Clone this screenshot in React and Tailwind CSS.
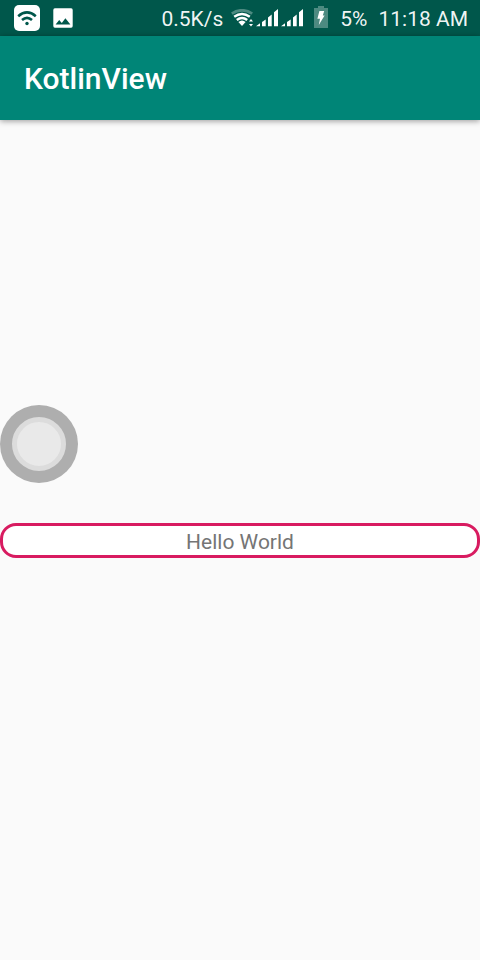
function HotspotIcon() {
  return (
    <svg width="26" height="26" viewBox="0 0 26 26" aria-hidden="true">
      <rect width="26" height="26" rx="5" fill="#fff" />
      <g fill="none" stroke="#00574b" strokeWidth="2.6">
        <path d="M4.2 11.2Q13 3.6 21.8 11.2" />
        <path d="M8 15Q13 10.6 18 15" />
      </g>
      <circle cx="13" cy="18.5" r="1.7" fill="#00574b" />
    </svg>
  );
}

function PictureIcon() {
  return (
    <svg width="20" height="20" viewBox="0 0 20 20" aria-hidden="true">
      <rect x="0.3" y="0.3" width="19.4" height="19.4" rx="1.6" fill="#fff" />
      <path d="M2.6 16.5 6.2 11.9 8.8 14.9 12.4 10.2 17.4 16.5Z" fill="#00574b" />
    </svg>
  );
}

function WifiIcon() {
  return (
    <svg width="23" height="18" viewBox="0 0 23 18" aria-hidden="true">
      <path d="M0.8 4.6Q11 -2 21.2 4.6" fill="none" stroke="#4d8a81" strokeWidth="2.8" />
      <g fill="none" stroke="#fff" strokeWidth="2.4">
        <path d="M3.2 7.8Q11 2 18.8 7.8" />
        <path d="M5.8 11Q11 6.8 16.2 11" />
      </g>
      <path d="M7.4 13Q11 10 14.6 13L11 17Z" fill="#fff" />
      <path d="M18 12.6 20 10 22 12.6ZM18 15 20 17.6 22 15Z" fill="#fff" />
    </svg>
  );
}

function SignalIcon() {
  return (
    <svg width="22" height="18" viewBox="0 0 22 18" aria-hidden="true">
      <path
        d="M0 17.3 4 14.3V17.3ZM6 17.3V13L9.7 10.5V17.3ZM12 17.3V8.5L15.7 5.5V17.3ZM18 17.3V3.2L22 0V17.3Z"
        fill="#fff"
      />
    </svg>
  );
}

function BatteryIcon() {
  return (
    <svg width="14" height="22" viewBox="0 0 14 22" aria-hidden="true">
      <path d="M4 0H10V2H14V22H0V2H4Z" fill="#4d8a81" />
      <path d="M5.4 5H10.2L8.8 9.6H10.6L4.8 19 6 12.8H3.4Z" fill="#fff" />
    </svg>
  );
}

function StatusBar() {
  return (
    <div className="flex h-9 items-center justify-between bg-[#00574b] pr-3 pl-3.5 text-[21px] leading-6 whitespace-nowrap text-white/95">
      <div className="flex items-center gap-[13px]">
        <HotspotIcon />
        <PictureIcon />
      </div>
      <div className="flex items-center">
        <span className="mr-2 pt-0.5">0.5K/s</span>
        <WifiIcon />
        <span className="ml-0.5 flex gap-[3px]">
          <SignalIcon />
          <SignalIcon />
        </span>
        <span className="ml-[11px] pb-0.5">
          <BatteryIcon />
        </span>
        <span className="ml-3 pt-0.5">5%</span>
        <span className="ml-[11px] pt-0.5">11:18 AM</span>
      </div>
    </div>
  );
}

export default function App() {
  return (
    <div className="relative flex min-h-screen flex-col bg-[#fafafa] font-['Roboto',sans-serif]">
      <StatusBar />
      <header className="flex h-21 items-center bg-[#008577] px-6 pt-0.5 shadow-[0_1px_6px_rgba(0,0,0,0.4)]">
        <h1 className="text-[30px] leading-9 font-medium text-white">KotlinView</h1>
      </header>
      <main className="flex flex-1 flex-col justify-center">
        <p className="rounded-[16px] border-3 border-[#d81b60] bg-white pt-1 text-center text-[21px] leading-[25px] text-[#757575]">
          Hello World
        </p>
      </main>
      <button
        type="button"
        aria-label="Assistive touch"
        className="absolute top-[405px] left-0 flex size-[78px] items-center justify-center rounded-full bg-[#aeaeae]"
      >
        <span className="size-[54px] rounded-full border-5 border-[#dcdcdc] bg-[#e9e9e9]" />
      </button>
    </div>
  );
}
